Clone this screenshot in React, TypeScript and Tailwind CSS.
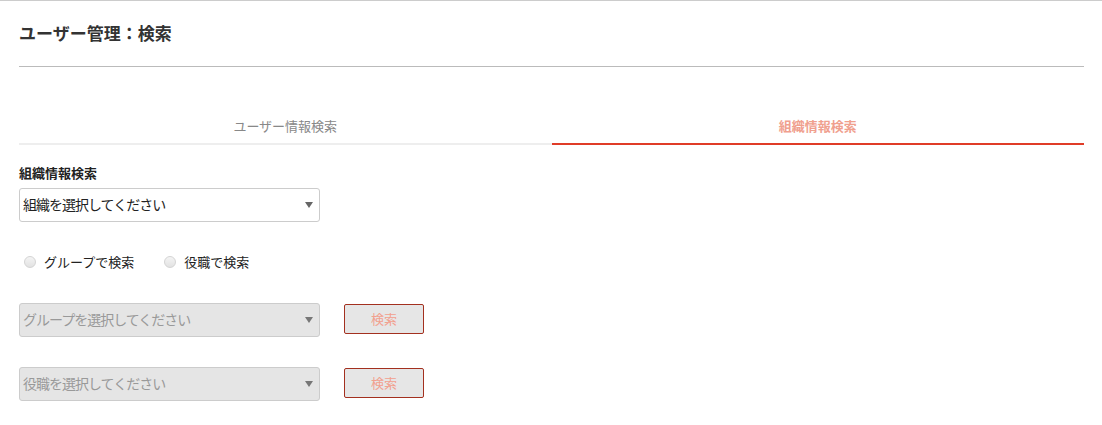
import React from "react";

const font = { fontFamily: '"Noto Sans CJK JP", "Noto Sans", sans-serif' };

function Arrow({ color = "#666" }: { color?: string }) {
  return (
    <svg width="8" height="6" viewBox="0 0 8 6" className="shrink-0">
      <path d="M0 0 H8 L4 6 Z" fill={color} />
    </svg>
  );
}

function SelectBox({ text, disabled = false }: { text: string; disabled?: boolean }) {
  return (
    <div
      className={
        disabled
          ? "flex h-[34px] w-[301px] items-center justify-between rounded-[3px] border border-[#cccccc] bg-[#e5e5e5] pl-[3px] pr-[6px] text-[14px] text-[#999999]"
          : "flex h-[34px] w-[301px] items-center justify-between rounded-[3px] border border-[#cccccc] bg-white pl-[3px] pr-[6px] text-[14px] text-[#222222]"
      }
    >
      <span className="pb-[2px] tracking-[-1px]">{text}</span>
      <Arrow color={disabled ? "#777" : "#666"} />
    </div>
  );
}

function SearchButton() {
  return (
    <button className="mt-[1px] h-[30px] w-[80px] rounded-[2px] border border-[#a3301f] bg-[#e6e6e6] text-[13px] text-[#f2a08e]">
      検索
    </button>
  );
}

function Radio({ label }: { label: string }) {
  return (
    <label className="flex items-center gap-[8px] text-[13px] text-[#222222]">
      <span className="h-[12px] w-[12px] rounded-full border border-[#d4d4d4] bg-gradient-to-b from-[#f4f4f4] to-[#e2e2e2]" />
      <span>{label}</span>
    </label>
  );
}

export default function App() {
  return (
    <div className="min-h-[425px] border-t border-[#cccccc] bg-white pl-[19px] pr-[18px]" style={font}>
      <h1 className="pt-[20px] text-[17px] font-bold leading-[24px] text-[#333333]">
        ユーザー管理：検索
      </h1>
      <div className="mt-[21px] border-t border-[#bbbbbb]" />

      {/* タブ */}
      <div className="mt-[49px] grid grid-cols-2">
        <div className="border-b-2 border-[#eeeeee] pb-[7px] text-center text-[13px] leading-[20px] text-[#888888]">
          ユーザー情報検索
        </div>
        <div className="border-b-2 border-[#e03c28] pb-[7px] text-center text-[13px] font-bold leading-[20px] text-[#f0a08e]">
          組織情報検索
        </div>
      </div>

      <div className="mt-[19px] text-[13px] font-bold leading-[18px] text-[#222222]">組織情報検索</div>
      <div className="mt-[6px]">
        <SelectBox text="組織を選択してください" />
      </div>

      <div className="mt-[30px] flex h-[20px] items-center gap-[30px] pl-[5px]">
        <Radio label="グループで検索" />
        <Radio label="役職で検索" />
      </div>

      <div className="mt-[31px] flex items-start gap-[24px]">
        <SelectBox text="グループを選択してください" disabled />
        <SearchButton />
      </div>

      <div className="mt-[30px] flex items-start gap-[24px]">
        <SelectBox text="役職を選択してください" disabled />
        <SearchButton />
      </div>
    </div>
  );
}
